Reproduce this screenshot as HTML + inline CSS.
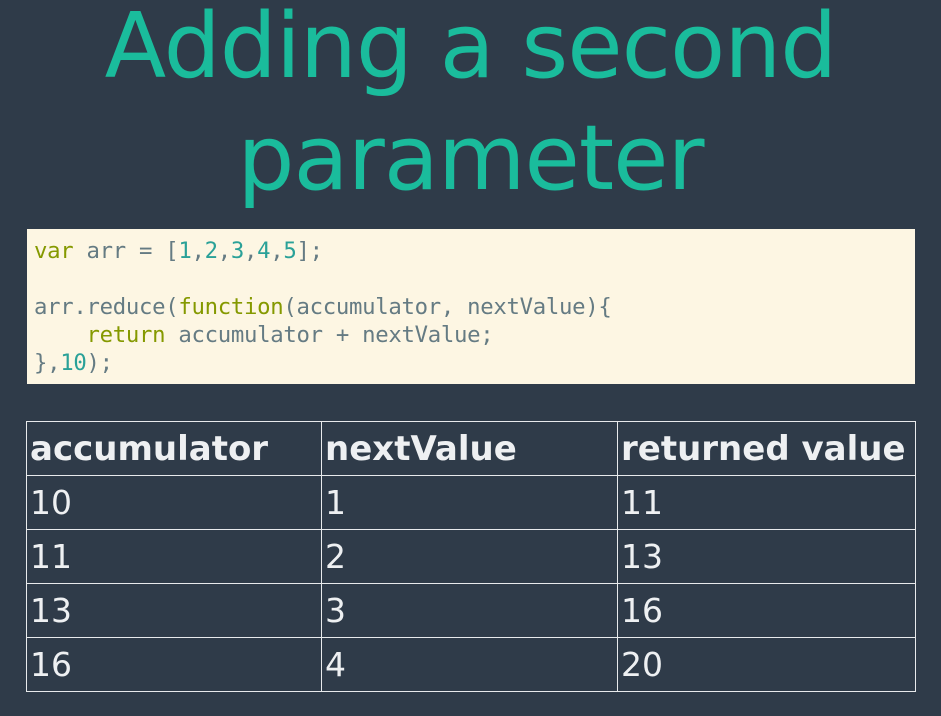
<!DOCTYPE html>
<html><head><meta charset="utf-8"><style>
html,body{margin:0;padding:0;}
body{width:941px;height:716px;background:#2f3b49;overflow:hidden;position:relative;font-family:"DejaVu Sans","Liberation Sans",sans-serif;}
h1{position:absolute;left:0;width:941px;margin:0;text-align:center;color:#1abc9c;font-weight:normal;font-size:90px;line-height:112px;letter-spacing:-1px;top:-9px;}
.code{position:absolute;left:27px;top:229px;width:888px;height:155px;background:#fdf6e3;box-sizing:border-box;padding:8px 0 0 7px;font-family:"DejaVu Sans Mono","Liberation Mono",monospace;font-size:22.3px;line-height:28px;color:#657b83;white-space:pre;letter-spacing:-0.3px;}
.k{color:#859900}.n{color:#2aa198}
table{position:absolute;left:26px;top:421px;width:889px;border-collapse:collapse;color:#eef0f2;table-layout:fixed;}
td,th{border:1px solid #e8eaec;height:53px;padding:0 0 0 3px;text-align:left;font-size:33px;vertical-align:middle;}
th{font-weight:bold;font-size:34px;}
td{font-weight:normal;}
</style></head><body>
<h1>Adding a second<br>parameter</h1>
<div class="code"><span class="k">var</span> arr = [<span class="n">1</span>,<span class="n">2</span>,<span class="n">3</span>,<span class="n">4</span>,<span class="n">5</span>];

arr.reduce(<span class="k">function</span>(accumulator, nextValue){
    <span class="k">return</span> accumulator + nextValue;
},<span class="n">10</span>);</div>
<table>
<colgroup><col style="width:295px"><col style="width:296px"><col style="width:298px"></colgroup>
<tr><th>accumulator</th><th>nextValue</th><th>returned value</th></tr>
<tr><td>10</td><td>1</td><td>11</td></tr>
<tr><td>11</td><td>2</td><td>13</td></tr>
<tr><td>13</td><td>3</td><td>16</td></tr>
<tr><td>16</td><td>4</td><td>20</td></tr>
</table>
</body></html>
